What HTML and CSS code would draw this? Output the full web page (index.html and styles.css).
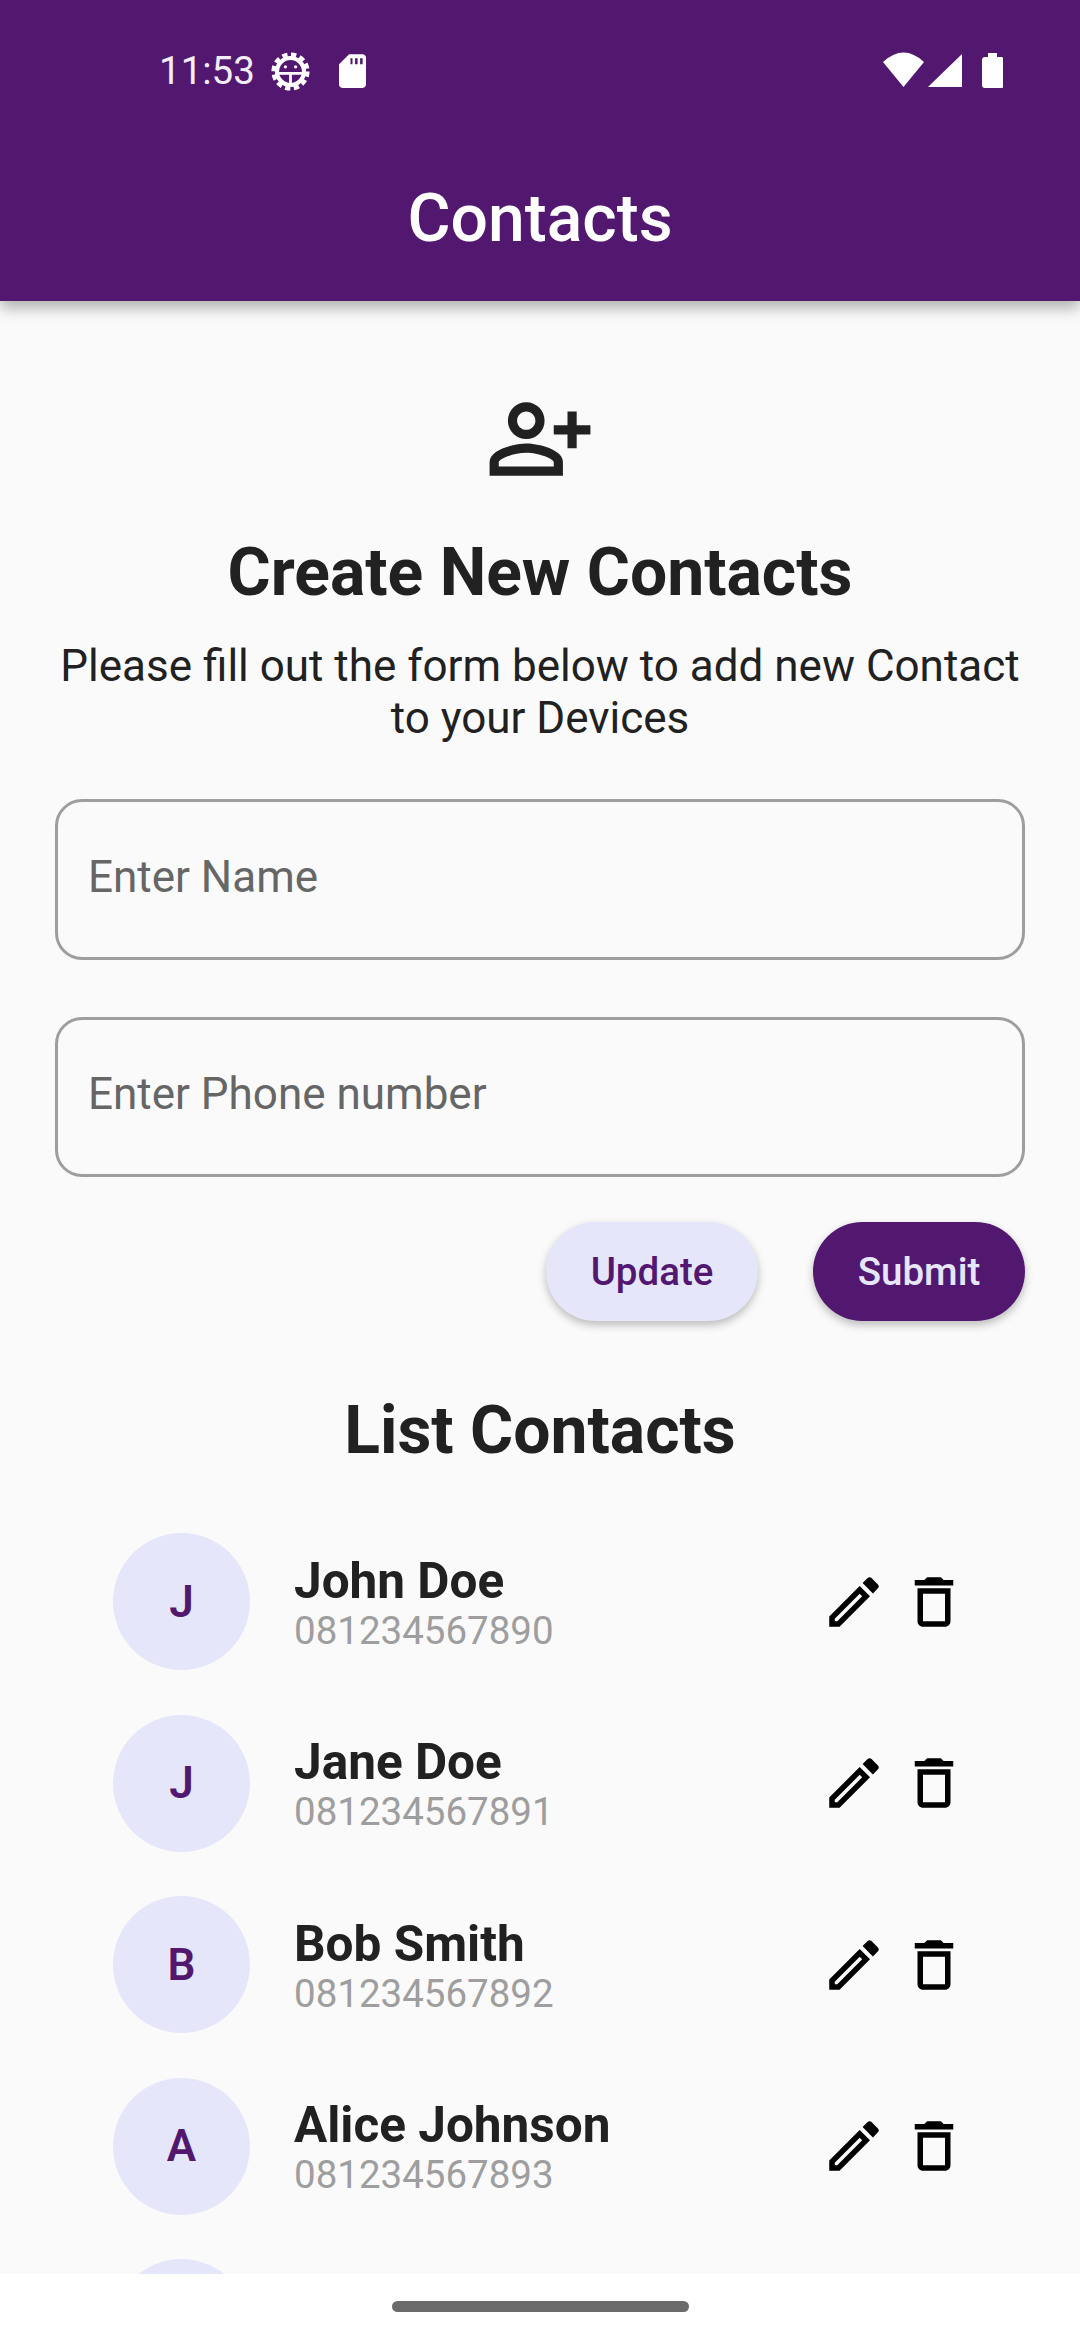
FILE: index.html
```html
<!DOCTYPE html>
<html lang="en">
<head>
<meta charset="utf-8">
<title>Contacts</title>
<link rel="stylesheet" href="styles.css">
</head>
<body>
<div class="page">
  <header class="appbar">
    <div class="status">
      <div class="status-left">
        <span class="time">11:53</span>
        <svg class="gear" viewBox="0 0 44 44">
          <circle class="gear-teeth" cx="22" cy="22" r="18"/>
          <circle class="gear-ring" cx="22" cy="22" r="14.5"/>
          <path class="gear-lines" d="M8 24h28M22 24v12"/>
          <circle class="gear-eye" cx="16.5" cy="17" r="1.8"/>
          <circle class="gear-eye" cx="27.5" cy="17" r="1.8"/>
        </svg>
        <svg class="sd" viewBox="4 2 16 20"><path d="M18 2h-8L4.020 8 4 20c0 1.100.9 2 2 2h12c1.100 0 2-.9 2-2V4c0-1.100-.9-2-2-2zm-6 6h-1.200V4.500H12V8zm3 0h-1.500V4.500H15V8zm3 0h-1.500V4.500H18V8z" fill-rule="evenodd"/></svg>
      </div>
      <svg class="status-right" viewBox="0 0 120 36">
        <path d="M0 10 Q20.500-9 41 10 L20.500 35z"/>
        <path d="M45 35 79 2V35z"/>
        <path d="M105 1h9v4h4.500a3 3 0 0 1 2.500 3V33a3 3 0 0 1-3 3H102a3 3 0 0 1-3-3V8a3 3 0 0 1 3-3h3z"/>
      </svg>
    </div>
    <h1 class="appbar-title">Contacts</h1>
  </header>

  <main class="content">
    <svg class="add-icon" viewBox="0 0 24 24"><path fill-rule="evenodd" d="M9 12c2.210 0 4-1.790 4-4s-1.790-4-4-4-4 1.790-4 4 1.790 4 4 4zm0-6c1.100 0 2 .9 2 2s-.9 2-2 2-2-.9-2-2 .9-2 2-2zM9 13c-2.670 0-8 1.340-8 4v3h16v-3c0-2.660-5.330-4-8-4zM3 18v-1c.2-.72 3.330-2 6-2s5.800 1.280 6 2v1H3zM20 9V6h-2v3h-3v2h3v3h2v-3h3V9h-3z"/></svg>
    <h2 class="heading">Create New Contacts</h2>
    <p class="subtitle">Please fill out the form below to add new Contact<br>to your Devices</p>

    <form class="form">
      <input class="field" type="text" placeholder="Enter Name">
      <input class="field" type="text" placeholder="Enter Phone number">
      <div class="actions">
        <button class="btn btn-light" type="button">Update</button>
        <button class="btn btn-dark" type="button">Submit</button>
      </div>
    </form>

    <h2 class="heading list-heading">List Contacts</h2>

    <ul class="list">
      <li class="row">
        <span class="avatar">J</span>
        <div class="info"><div class="name">John Doe</div><div class="phone">081234567890</div></div>
        <svg class="icon" viewBox="0 0 24 24"><path d="M14.060 9.020l.92.92L5.920 19H5v-.92l9.060-9.060M17.660 3c-.25 0-.51.1-.7.29l-1.830 1.830 3.750 3.750 1.830-1.830c.39-.39.39-1.020 0-1.410l-2.340-2.340c-.2-.2-.45-.29-.71-.29zm-3.600 3.190L3 17.250V21h3.750L17.810 9.940l-3.750-3.750z"/></svg>
        <svg class="icon" viewBox="0 0 24 24"><path d="M16 9v10H8V9h8m-1.500-6h-5l-1 1H5v2h14V4h-3.500l-1-1zM18 7H6v12c0 1.100.9 2 2 2h8c1.100 0 2-.9 2-2V7z"/></svg>
      </li>
      <li class="row">
        <span class="avatar">J</span>
        <div class="info"><div class="name">Jane Doe</div><div class="phone">081234567891</div></div>
        <svg class="icon" viewBox="0 0 24 24"><path d="M14.060 9.020l.92.92L5.920 19H5v-.92l9.060-9.060M17.660 3c-.25 0-.51.1-.7.29l-1.830 1.830 3.750 3.750 1.830-1.830c.39-.39.39-1.020 0-1.410l-2.340-2.340c-.2-.2-.45-.29-.71-.29zm-3.600 3.190L3 17.250V21h3.750L17.810 9.940l-3.750-3.750z"/></svg>
        <svg class="icon" viewBox="0 0 24 24"><path d="M16 9v10H8V9h8m-1.500-6h-5l-1 1H5v2h14V4h-3.500l-1-1zM18 7H6v12c0 1.100.9 2 2 2h8c1.100 0 2-.9 2-2V7z"/></svg>
      </li>
      <li class="row">
        <span class="avatar">B</span>
        <div class="info"><div class="name">Bob Smith</div><div class="phone">081234567892</div></div>
        <svg class="icon" viewBox="0 0 24 24"><path d="M14.060 9.020l.92.92L5.920 19H5v-.92l9.060-9.060M17.660 3c-.25 0-.51.1-.7.29l-1.830 1.830 3.750 3.750 1.830-1.830c.39-.39.39-1.020 0-1.410l-2.340-2.340c-.2-.2-.45-.29-.71-.29zm-3.600 3.190L3 17.250V21h3.750L17.810 9.940l-3.750-3.750z"/></svg>
        <svg class="icon" viewBox="0 0 24 24"><path d="M16 9v10H8V9h8m-1.500-6h-5l-1 1H5v2h14V4h-3.500l-1-1zM18 7H6v12c0 1.100.9 2 2 2h8c1.100 0 2-.9 2-2V7z"/></svg>
      </li>
      <li class="row">
        <span class="avatar">A</span>
        <div class="info"><div class="name">Alice Johnson</div><div class="phone">081234567893</div></div>
        <svg class="icon" viewBox="0 0 24 24"><path d="M14.060 9.020l.92.92L5.920 19H5v-.92l9.060-9.060M17.660 3c-.25 0-.51.1-.7.29l-1.830 1.830 3.750 3.750 1.830-1.830c.39-.39.39-1.020 0-1.410l-2.340-2.340c-.2-.2-.45-.29-.71-.29zm-3.600 3.190L3 17.250V21h3.750L17.810 9.940l-3.750-3.750z"/></svg>
        <svg class="icon" viewBox="0 0 24 24"><path d="M16 9v10H8V9h8m-1.500-6h-5l-1 1H5v2h14V4h-3.500l-1-1zM18 7H6v12c0 1.100.9 2 2 2h8c1.100 0 2-.9 2-2V7z"/></svg>
      </li>
      <li class="row">
        <span class="avatar"></span>
      </li>
    </ul>
  </main>

  <footer class="navbar"><span class="handle"></span></footer>
</div>
</body>
</html>
```

FILE: styles.css
```css
* { box-sizing: border-box; }
html, body { margin: 0; padding: 0; }
body { font-family: Roboto, "Liberation Sans", sans-serif; background: #fff; }

.page {
  width: 1080px;
  height: 2340px;
  display: flex;
  flex-direction: column;
  overflow: hidden;
}

/* App bar */
.appbar {
  flex: none;
  height: 301px;
  background: #521870;
  color: #fff;
  position: relative;
  z-index: 1;
  box-shadow: 0 7px 14px rgba(0, 0, 0, .3);
}
.status {
  height: 183px;
  padding: 50px 77px 0 159px;
  display: flex;
  justify-content: space-between;
  align-items: flex-start;
}
.status-left { display: flex; align-items: center; height: 42px; }
.time { font-size: 38.5px; line-height: 42px; color: #f3edf6; }
.gear { width: 41px; height: 41px; margin-left: 15.5px; fill: none; stroke: #fff; }
.gear-teeth { stroke-width: 5; stroke-dasharray: 5.600 3.825; }
.gear-ring { stroke-width: 4.500; }
.gear-lines { stroke-width: 3; }
.gear-eye { fill: #fff; stroke: none; }
.sd { width: 27px; height: 34px; margin-left: 27.5px; fill: #fff; }
.status-right { width: 120px; height: 36px; margin-top: 2px; fill: #fff; }
.appbar-title {
  margin: 0;
  text-align: center;
  font-size: 66px;
  line-height: 72px;
  font-weight: 500;
}

/* Content */
.content {
  flex: 1;
  min-height: 0;
  overflow: hidden;
  background: #fafafa;
  padding: 83px 55px 0;
  color: #212121;
}
.add-icon { display: block; width: 110px; height: 110px; margin: 0 auto; fill: #212121; }
.heading {
  margin: 40px 0 0;
  text-align: center;
  font-size: 66px;
  line-height: 78px;
  font-weight: 700;
}
.subtitle {
  margin: 27.5px 0 0;
  text-align: center;
  font-size: 44px;
  line-height: 52px;
}

/* Form */
.form { margin-top: 55.5px; display: flex; flex-direction: column; gap: 57px; }
.field {
  display: block;
  width: 100%;
  height: 160.5px;
  padding: 0 30px 5px;
  border: 3px solid #9e9e9e;
  border-radius: 27px;
  background: transparent;
  font: 400 44px Roboto, sans-serif;
  color: #212121;
  outline: none;
}
.field::placeholder { color: #666; opacity: 1; }
.actions { margin-top: -12px; display: flex; justify-content: flex-end; gap: 55px; }
.btn {
  width: 212px;
  height: 99px;
  border: 0;
  border-radius: 50px;
  font: 500 38.500px Roboto, sans-serif;
  box-shadow: 0 4px 8px rgba(0, 0, 0, .25);
}
.btn-light { background: #e6e6fa; color: #521870; }
.btn-dark { background: #521870; color: #e6e6fa; }

/* List */
.list-heading { margin-top: 70.5px; }
.list {
  list-style: none;
  margin: 63.5px 0 0;
  padding: 0 58px;
  display: flex;
  flex-direction: column;
  gap: 44.500px;
}
.row { display: flex; align-items: center; height: 137px; gap: 14px; }
.avatar {
  flex: none;
  width: 137px;
  height: 137px;
  border-radius: 50%;
  background: #e6e6fa;
  color: #521870;
  display: flex;
  align-items: center;
  justify-content: center;
  font-size: 44px;
  font-weight: 600;
}
.info { flex: 1; min-width: 0; margin: 2px 0 0 30px; }
.name { font-size: 49.5px; line-height: 56px; font-weight: 700; }
.phone { font-size: 38.500px; line-height: 44px; color: #9e9e9e; }
.icon { flex: none; width: 66px; height: 66px; fill: #000; }

/* Navigation bar */
.navbar {
  flex: none;
  height: 66px;
  background: #fff;
  display: flex;
  justify-content: center;
  align-items: flex-start;
  padding-top: 27px;
}
.handle { width: 297px; height: 11px; border-radius: 6px; background: #6b6b6b; }
```
